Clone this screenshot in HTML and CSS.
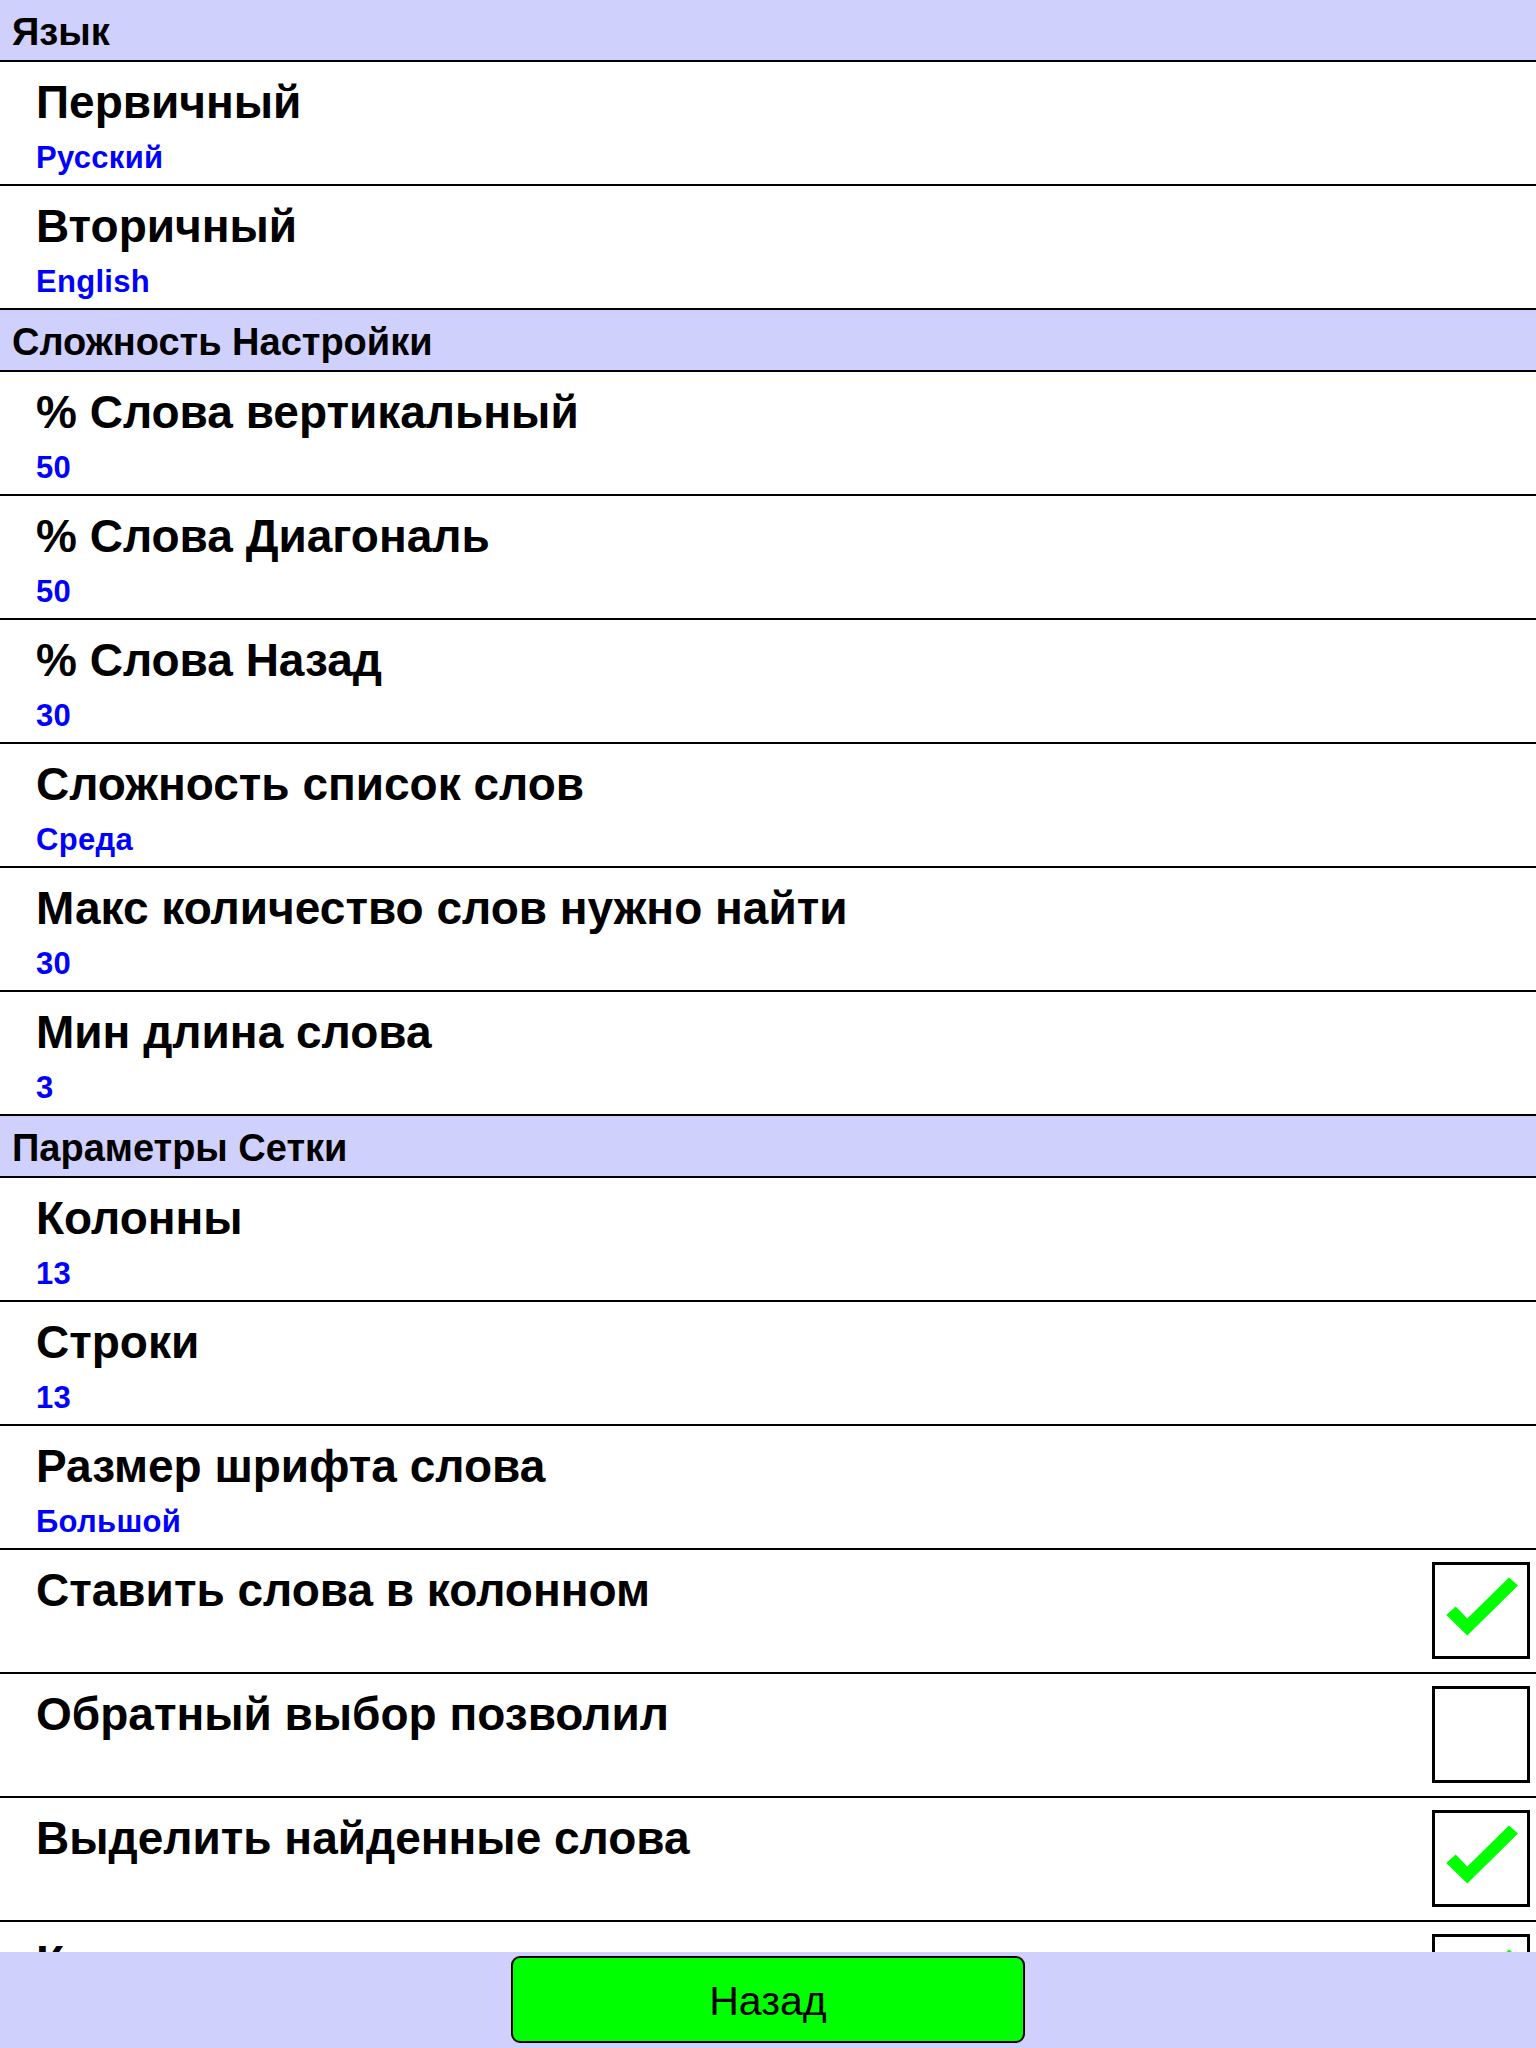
FILE: index.html
```html
<!DOCTYPE html>
<html lang="ru">
<head>
<meta charset="utf-8">
<title>Настройки</title>
<link rel="stylesheet" href="styles.css">
</head>
<body>
<div class="screen">
  <div class="list">
    <div class="section">Язык</div>
    <div class="row"><div class="text"><div class="title">Первичный</div><div class="value">Русский</div></div></div>
    <div class="row"><div class="text"><div class="title">Вторичный</div><div class="value">English</div></div></div>
    <div class="section">Сложность Настройки</div>
    <div class="row"><div class="text"><div class="title">% Слова вертикальный</div><div class="value">50</div></div></div>
    <div class="row"><div class="text"><div class="title">% Слова Диагональ</div><div class="value">50</div></div></div>
    <div class="row"><div class="text"><div class="title">% Слова Назад</div><div class="value">30</div></div></div>
    <div class="row"><div class="text"><div class="title">Сложность список слов</div><div class="value">Среда</div></div></div>
    <div class="row"><div class="text"><div class="title">Макс количество слов нужно найти</div><div class="value">30</div></div></div>
    <div class="row"><div class="text"><div class="title">Мин длина слова</div><div class="value">3</div></div></div>
    <div class="section">Параметры Сетки</div>
    <div class="row"><div class="text"><div class="title">Колонны</div><div class="value">13</div></div></div>
    <div class="row"><div class="text"><div class="title">Строки</div><div class="value">13</div></div></div>
    <div class="row"><div class="text"><div class="title">Размер шрифта слова</div><div class="value">Большой</div></div></div>
    <div class="row"><div class="text"><div class="title">Ставить слова в колонном</div></div>
      <svg class="check" viewBox="0 0 98 97" width="98" height="97"><rect x="1.5" y="1.5" width="95" height="94" fill="#fff" stroke="#000" stroke-width="3"/><polygon points="14.3,53.1 23.7,44.4 35.3,56.6 77,15.4 86,23.4 35.3,73.4" fill="#00ff00"/></svg></div>
    <div class="row"><div class="text"><div class="title">Обратный выбор позволил</div></div>
      <svg class="check" viewBox="0 0 98 97" width="98" height="97"><rect x="1.5" y="1.5" width="95" height="94" fill="#fff" stroke="#000" stroke-width="3"/></svg></div>
    <div class="row"><div class="text"><div class="title">Выделить найденные слова</div></div>
      <svg class="check" viewBox="0 0 98 97" width="98" height="97"><rect x="1.5" y="1.5" width="95" height="94" fill="#fff" stroke="#000" stroke-width="3"/><polygon points="14.3,53.1 23.7,44.4 35.3,56.6 77,15.4 86,23.4 35.3,73.4" fill="#00ff00"/></svg></div>
    <div class="row"><div class="text"><div class="title">Конечная проверка</div></div>
      <svg class="check" viewBox="0 0 98 97" width="98" height="97"><rect x="1.5" y="1.5" width="95" height="94" fill="#fff" stroke="#000" stroke-width="3"/><polygon points="14.3,53.1 23.7,44.4 35.3,56.6 77,15.4 86,23.4 35.3,73.4" fill="#00ff00"/></svg></div>
  </div>
  <div class="footer">
    <button class="back">Назад</button>
  </div>
</div>
</body>
</html>
```
FILE: styles.css
```css
html, body {
  margin: 0;
  padding: 0;
  overflow: hidden;
}
body {
  font-family: "Liberation Sans", Arial, Helvetica, sans-serif;
  background: #ffffff;
  color: #000;
}
.screen {
  height: 2048px;
  display: flex;
  flex-direction: column;
}
.list {
  flex: 1;
  overflow: hidden;
}
.section {
  height: 62px;
  box-sizing: border-box;
  padding: 5px 0 0 12px;
  font-size: 38px;
  line-height: 55px;
  font-weight: bold;
  background: #d0d0fc;
  border-bottom: 2px solid #000;
  white-space: nowrap;
}
.row {
  height: 124px;
  box-sizing: border-box;
  border-bottom: 2px solid #000;
  display: flex;
  justify-content: space-between;
  align-items: flex-start;
  padding: 13px 6px 0 36px;
}
.title {
  font-size: 46px;
  line-height: 54px;
  font-weight: bold;
  white-space: nowrap;
}
.value {
  margin-top: 11px;
  font-size: 31px;
  line-height: 36px;
  font-weight: bold;
  letter-spacing: 0.3px;
  color: #0000ff;
}
.check {
  display: block;
  margin-top: -1px;
  flex: none;
}
.footer {
  height: 96px;
  flex: none;
  background: #d0d0fc;
  display: flex;
  justify-content: center;
  padding-top: 4px;
  box-sizing: border-box;
}
.back {
  width: 514px;
  height: 87px;
  background: #00ff00;
  border: 2px solid #000;
  border-radius: 9px;
  font-family: "Liberation Sans", Arial, Helvetica, sans-serif;
  font-size: 41px;
  color: #000;
  padding: 4px 0 0 0;
}
```
